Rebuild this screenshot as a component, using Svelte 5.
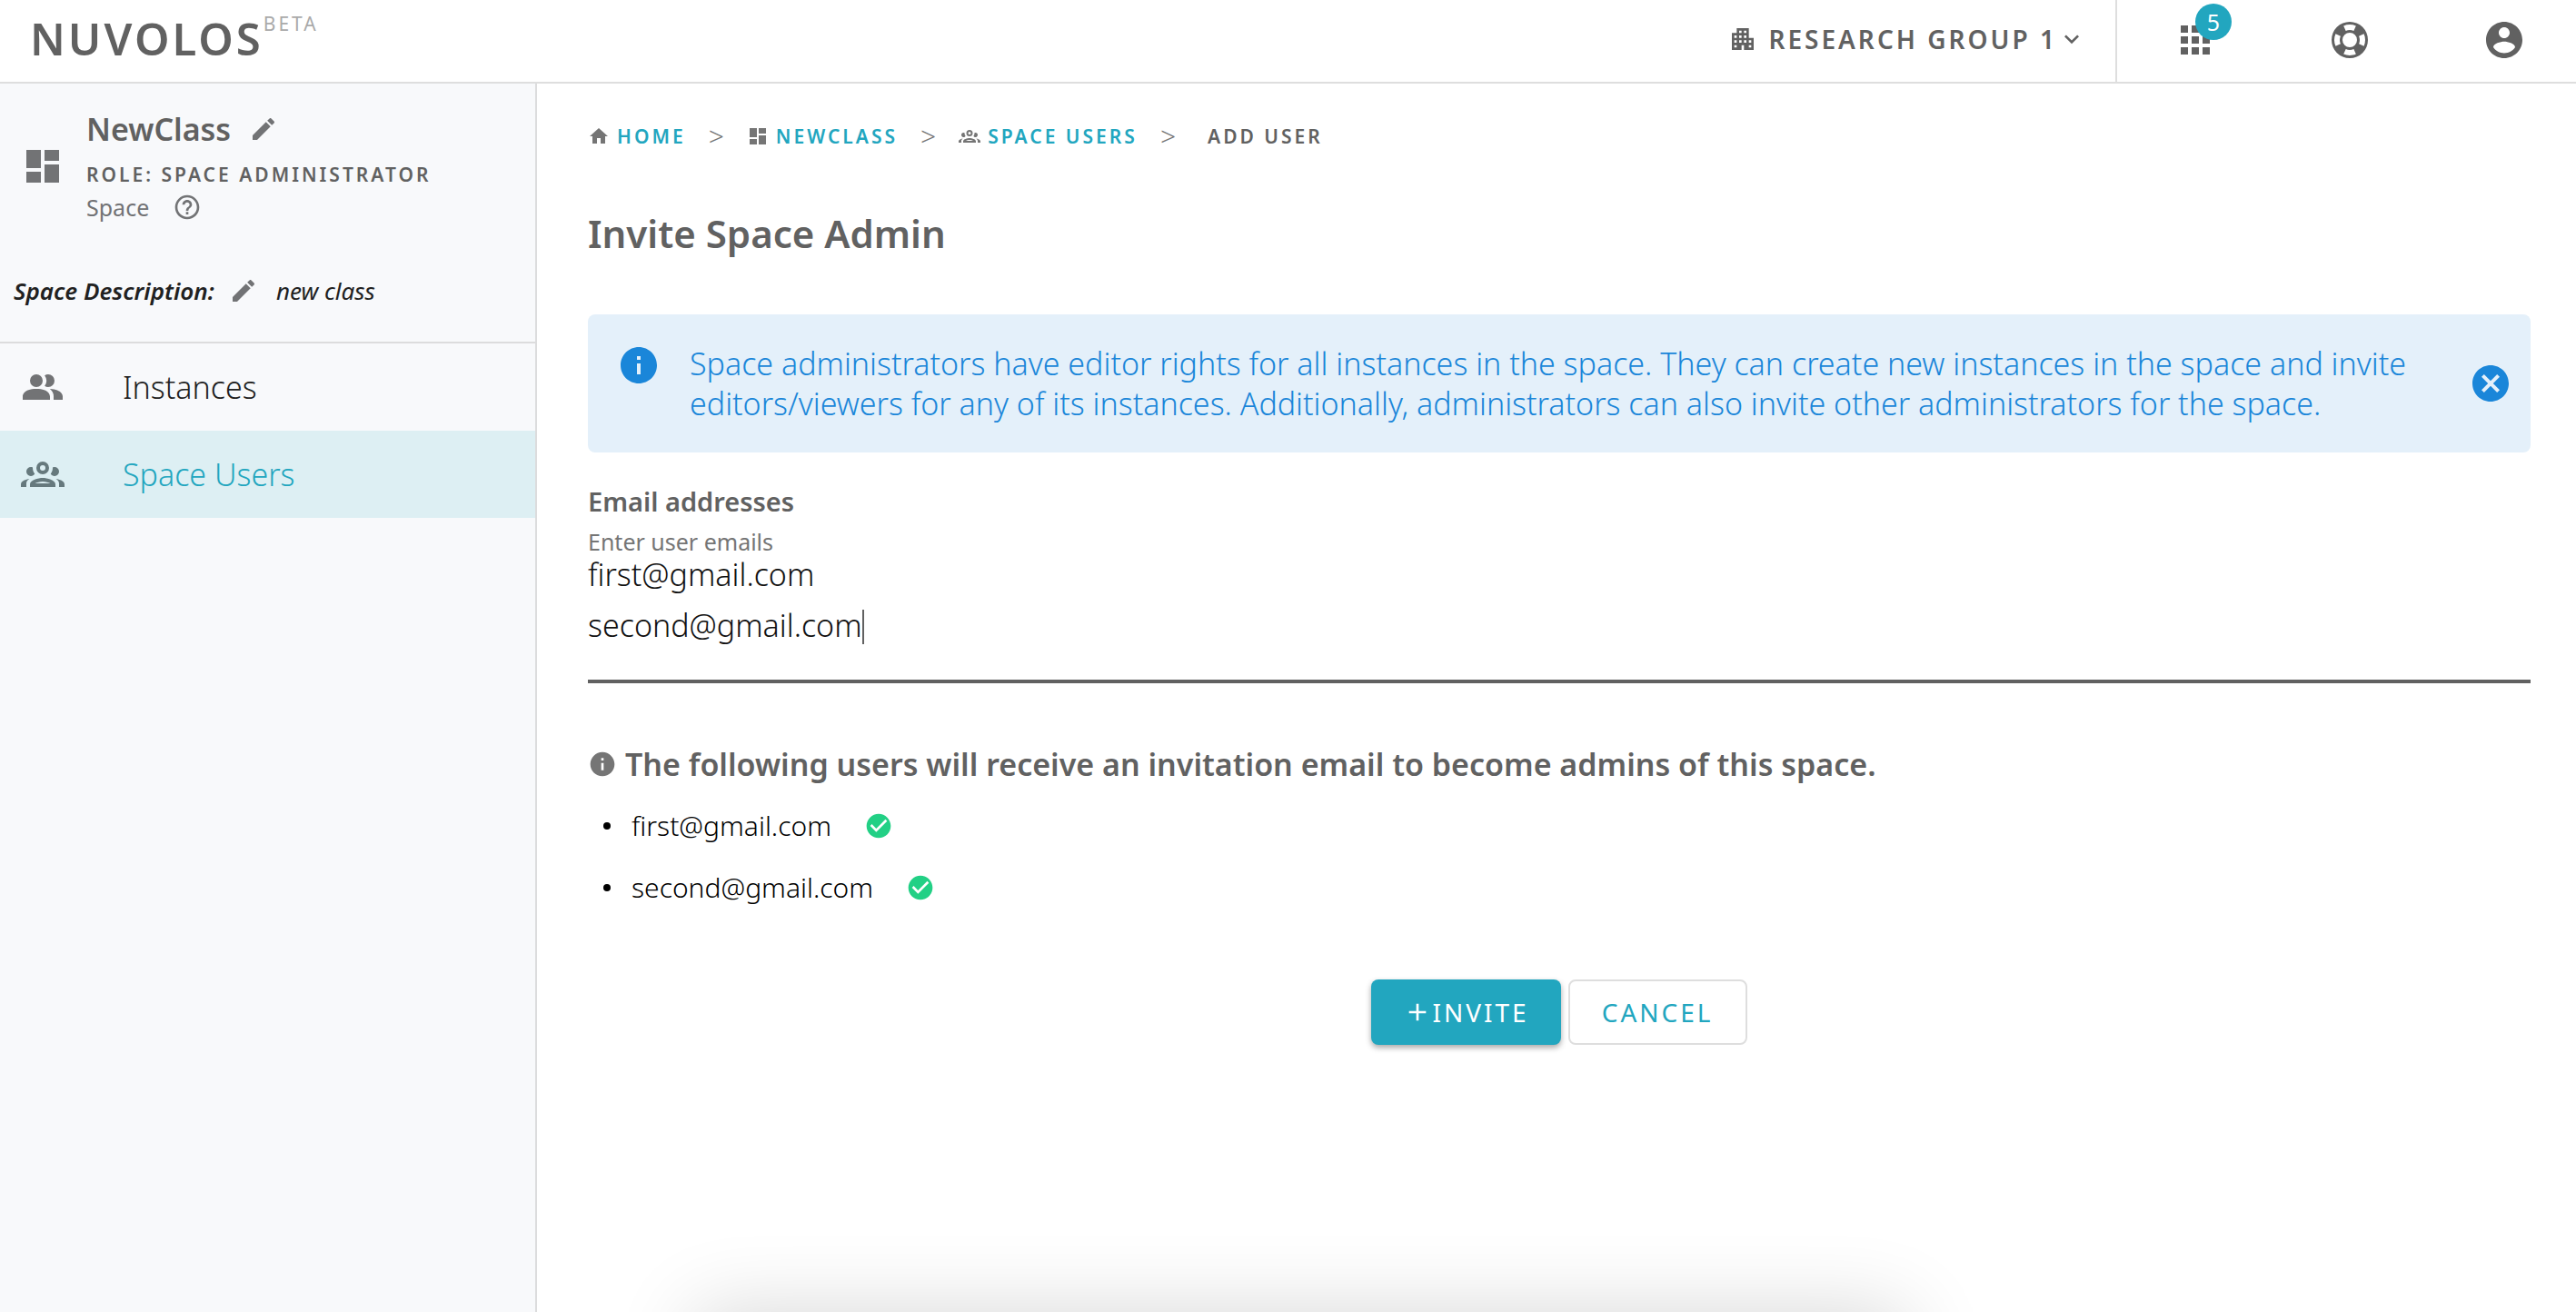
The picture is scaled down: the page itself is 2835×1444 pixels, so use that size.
<script>
  const icons = {
    dashboard: 'M3 13h8V3H3v10zm0 8h8v-6H3v6zm10 0h8V11h-8v10zm0-18v6h8V3h-8z',
    pencil: 'M20.71 7.04c.39-.39.39-1.04 0-1.41l-2.34-2.34c-.37-.39-1.02-.39-1.41 0l-1.84 1.83 3.75 3.75M3 17.25V21h3.75L17.81 9.93l-3.75-3.75L3 17.25z',
    help: 'M11 18h2v-2h-2v2zm1-16C6.48 2 2 6.48 2 12s4.48 10 10 10 10-4.48 10-10S17.52 2 12 2zm0 18c-4.41 0-8-3.59-8-8s3.59-8 8-8 8 3.59 8 8-3.59 8-8 8zm0-14c-2.21 0-4 1.79-4 4h2c0-1.1.9-2 2-2s2 .9 2 2c0 2-3 1.75-3 5h2c0-2.25 3-2.5 3-5 0-2.21-1.79-4-4-4z',
    people: 'M16 17v2H1v-2s0-4 7.5-4 7.5 4 7.5 4M12 8.5A3.5 3.5 0 1 0 5 8.5a3.5 3.5 0 0 0 7 0m3.94 4.5A5.32 5.32 0 0 1 18 17v2h5v-2s0-3.63-7.06-4M15 5a3.39 3.39 0 0 0-1.93.59 5 5 0 0 1 0 5.82A3.39 3.39 0 0 0 15 12a3.5 3.5 0 0 0 0-7z',
    group: 'M12,5A3.5,3.5 0 0,0 8.5,8.5A3.5,3.5 0 0,0 12,12A3.5,3.5 0 0,0 15.5,8.5A3.5,3.5 0 0,0 12,5M12,7A1.5,1.5 0 0,1 13.5,8.5A1.5,1.5 0 0,1 12,10A1.5,1.5 0 0,1 10.5,8.5A1.5,1.5 0 0,1 12,7M5.5,8A2.5,2.5 0 0,0 3,10.5C3,11.44 3.53,12.25 4.29,12.68C4.65,12.88 5.06,13 5.5,13C5.94,13 6.35,12.88 6.71,12.68C7.08,12.47 7.39,12.17 7.62,11.81C6.89,10.86 6.5,9.7 6.5,8.5C6.5,8.41 6.5,8.31 6.5,8.22C6.2,8.08 5.86,8 5.5,8M18.5,8C18.14,8 17.8,8.08 17.5,8.22C17.5,8.31 17.5,8.41 17.5,8.5C17.5,9.7 17.11,10.86 16.38,11.81C16.5,12 16.63,12.15 16.78,12.3C16.94,12.45 17.1,12.58 17.29,12.68C17.65,12.88 18.06,13 18.5,13C18.94,13 19.35,12.88 19.71,12.68C20.47,12.25 21,11.44 21,10.5A2.5,2.5 0 0,0 18.5,8M12,14C9.66,14 5,15.17 5,17.5V19H19V17.5C19,15.17 14.34,14 12,14M4.71,14.55C2.78,14.78 0,15.76 0,17.5V19H3V17.07C3,16.06 3.69,15.22 4.71,14.55M19.29,14.55C20.31,15.22 21,16.06 21,17.07V19H24V17.5C24,15.76 21.22,14.78 19.29,14.55M12,16C13.53,16 15.24,16.5 16.23,17H7.77C8.76,16.5 10.47,16 12,16Z',
    building: 'M17 11V3H7v4H3v14h8v-4h2v4h8V11h-4zM7 19H5v-2h2v2zm0-4H5v-2h2v2zm0-4H5V9h2v2zm4 4H9v-2h2v2zm0-4H9V9h2v2zm0-4H9V5h2v2zm4 8h-2v-2h2v2zm0-4h-2V9h2v2zm0-4h-2V5h2v2zm4 12h-2v-2h2v2zm0-4h-2v-2h2v2z',
    chevron: 'M7.41 8.58 12 13.17l4.59-4.59L18 10l-6 6-6-6 1.41-1.42z',
    apps: 'M4 8h4V4H4v4zm6 12h4v-4h-4v4zm-6 0h4v-4H4v4zm0-6h4v-4H4v4zm6 0h4v-4h-4v4zm6-10v4h4V4h-4zm-6 4h4V4h-4v4zm6 6h4v-4h-4v4zm0 6h4v-4h-4v4z',
    lifebuoy: 'M19.79 15.41C20.74 13.24 20.74 10.75 19.79 8.59L17.05 9.83C17.65 11.21 17.65 12.78 17.06 14.17L19.79 15.41M15.42 4.21C13.25 3.26 10.76 3.26 8.59 4.21L9.83 6.94C11.22 6.35 12.79 6.35 14.18 6.95L15.42 4.21M4.21 8.58C3.26 10.76 3.26 13.24 4.21 15.42L6.95 14.17C6.35 12.79 6.35 11.21 6.95 9.82L4.21 8.58M8.59 19.79C10.76 20.74 13.25 20.74 15.42 19.78L14.18 17.05C12.8 17.65 11.22 17.65 9.84 17.06L8.59 19.79M12 2A10 10 0 0 1 22 12A10 10 0 0 1 12 22A10 10 0 0 1 2 12A10 10 0 0 1 12 2M12 8A4 4 0 0 0 8 12A4 4 0 0 0 12 16A4 4 0 0 0 16 12A4 4 0 0 0 12 8Z',
    account: 'M12 2C6.48 2 2 6.48 2 12s4.48 10 10 10 10-4.48 10-10S17.52 2 12 2zm0 3c1.66 0 3 1.34 3 3s-1.34 3-3 3-3-1.34-3-3 1.34-3 3-3zm0 14.2c-2.5 0-4.71-1.28-6-3.22.03-1.99 4-3.08 6-3.08 1.99 0 5.97 1.09 6 3.08-1.29 1.94-3.5 3.22-6 3.22z',
    home: 'M10 20v-6h4v6h5v-8h3L12 3 2 12h3v8h5z',
    info: 'M12 2C6.48 2 2 6.48 2 12s4.48 10 10 10 10-4.48 10-10S17.52 2 12 2zm1 15h-2v-6h2v6zm0-8h-2V7h2v2z',
    close: 'M12 2C6.47 2 2 6.47 2 12s4.47 10 10 10 10-4.47 10-10S17.53 2 12 2zm5 13.59L15.59 17 12 13.41 8.41 17 7 15.59 10.59 12 7 8.41 8.41 7 12 10.59 15.59 7 17 8.41 13.41 12 17 15.59z',
    check: 'M12 2C6.48 2 2 6.48 2 12s4.48 10 10 10 10-4.48 10-10S17.52 2 12 2zm-2 15l-5-5 1.41-1.41L10 14.17l7.59-7.59L19 8l-9 9z',
    plus: 'M19 13h-6v6h-2v-6H5v-2h6V5h2v6h6v2z'
  };

  const nav = [
    { label: 'Instances', icon: 'people', active: false },
    { label: 'Space Users', icon: 'group', active: true }
  ];

  const crumbs = [
    { label: 'Home', icon: 'home' },
    { label: 'NewClass', icon: 'dashboard' },
    { label: 'Space Users', icon: 'group' }
  ];

  let emails = $state('first@gmail.com\nsecond@gmail.com');
  let showInfo = $state(true);
  let recipients = $derived(emails.split('\n').map((e) => e.trim()).filter(Boolean));
</script>

{#snippet icon(name, size)}
  <svg class="icon {size}" viewBox="0 0 24 24" aria-hidden="true"><path d={icons[name]} /></svg>
{/snippet}

<div class="app">
  <header>
    <a class="logo" href="#home">NUVOLOS<sup>BETA</sup></a>
    <button class="group">
      {@render icon('building', 'sm')}
      <span>RESEARCH GROUP 1</span>
      {@render icon('chevron', 'sm')}
    </button>
    <div class="actions">
      <button class="bare badged" aria-label="Applications">
        {@render icon('apps', 'lg')}
        <span class="badge">5</span>
      </button>
      <button class="bare" aria-label="Support">{@render icon('lifebuoy', 'lg')}</button>
      <button class="bare" aria-label="Account">{@render icon('account', 'lg')}</button>
    </div>
  </header>

  <div class="body">
    <aside>
      <div class="space">
        <div class="summary">
          {@render icon('dashboard', 'lg')}
          <div class="details">
            <div class="line name">
              <h2>NewClass</h2>
              <button class="bare" aria-label="Rename space">{@render icon('pencil', 'sm')}</button>
            </div>
            <div class="role">ROLE: SPACE ADMINISTRATOR</div>
            <div class="line kind">
              <span>Space</span>
              <button class="bare" aria-label="About spaces">{@render icon('help', 'sm')}</button>
            </div>
          </div>
        </div>
        <div class="description">
          <strong>Space Description:</strong>
          <button class="bare" aria-label="Edit description">{@render icon('pencil', 'sm')}</button>
          <span>new class</span>
        </div>
      </div>
      <nav>
        {#each nav as item}
          <a href="#{item.icon}" class:active={item.active}>
            {@render icon(item.icon, 'lg')}
            <span>{item.label}</span>
          </a>
        {/each}
      </nav>
    </aside>

    <main>
      <ol class="crumbs">
        {#each crumbs as crumb}
          <li>
            {@render icon(crumb.icon, 'xs')}
            <a href="#{crumb.icon}">{crumb.label}</a>
          </li>
          <li class="sep" aria-hidden="true">&gt;</li>
        {/each}
        <li class="current">Add user</li>
      </ol>

      <h1>Invite Space Admin</h1>

      {#if showInfo}
        <div class="alert">
          <div class="alert-icon">{@render icon('info', 'lg')}</div>
          <p>Space administrators have editor rights for all instances in the space. They can create new instances in the space and invite editors/viewers for any of its instances. Additionally, administrators can also invite other administrators for the space.</p>
          <button class="bare" aria-label="Dismiss" onclick={() => (showInfo = false)}>{@render icon('close', 'lg')}</button>
        </div>
      {/if}

      <h3>Email addresses</h3>
      <label for="emails">Enter user emails</label>
      <div class="field">
        <div class="mirror" aria-hidden="true"><span>{emails}</span><i class="caret"></i></div>
        <textarea id="emails" rows="2" spellcheck="false" bind:value={emails}></textarea>
      </div>

      <div class="notice">
        {@render icon('info', 'sm')}
        <strong>The following users will receive an invitation email to become admins of this space.</strong>
      </div>
      <ul class="recipients">
        {#each recipients as email}
          <li><span>{email}</span>{@render icon('check', 'sm')}</li>
        {/each}
      </ul>

      <div class="buttons">
        <button class="primary">{@render icon('plus', 'sm')}INVITE</button>
        <button class="secondary">CANCEL</button>
      </div>
    </main>
  </div>
  <div class="sheet" aria-hidden="true"></div>
</div>

<style>
  :global(body) {
    background: #fff;
  }
  .app {
    display: flex;
    flex-direction: column;
    min-height: 100vh;
    font-family: 'Noto Sans', 'Open Sans', sans-serif;
    font-size: 34px;
    font-weight: 300;
    color: #212121;
  }
  .app * {
    box-sizing: border-box;
  }
  h1, h2, h3, p, ol, ul {
    margin: 0;
    padding: 0;
    font-weight: 600;
  }
  strong {
    font-weight: 600;
  }
  a {
    text-decoration: none;
    color: inherit;
  }
  button {
    font: inherit;
    color: inherit;
    background: none;
    border: 0;
    padding: 0;
    cursor: pointer;
  }
  .bare {
    display: flex;
  }
  .icon {
    display: block;
    flex: none;
    fill: currentColor;
  }
  .xs {
    width: 24px;
    height: 24px;
  }
  .sm {
    width: 32px;
    height: 32px;
  }
  .lg {
    width: 48px;
    height: 48px;
  }

  header {
    display: flex;
    align-items: stretch;
    height: 92px;
    border-bottom: 2px solid #dedede;
    color: #616161;
  }
  .logo {
    margin-right: auto;
    padding: 12px 0 0 33px;
    font-size: 49px;
    line-height: 60px;
    font-weight: 600;
    letter-spacing: 3px;
  }
  .logo sup {
    display: inline-block;
    vertical-align: top;
    font-size: 21px;
    line-height: 28px;
    font-weight: 400;
    letter-spacing: 3px;
    color: #aaa;
  }
  .group {
    display: flex;
    align-items: center;
    padding: 0 32px 4px 0;
    font-size: 28px;
    font-weight: 600;
    letter-spacing: 3px;
  }
  .group span {
    padding-left: 12px;
  }
  .actions {
    display: flex;
    align-items: center;
    gap: 122px;
    padding: 0 55px 2px 62px;
    border-left: 2px solid #dedede;
  }
  .badged {
    position: relative;
  }
  .badge {
    position: absolute;
    left: 24px;
    top: -16px;
    width: 40px;
    height: 40px;
    border-radius: 50%;
    background: #22a6bf;
    color: #fff;
    font-size: 25px;
    font-weight: 400;
    line-height: 40px;
    text-align: center;
  }

  .body {
    display: flex;
    flex: 1;
  }
  aside {
    flex: none;
    width: 591px;
    background: #f8f9fb;
    border-right: 2px solid #dcdcdd;
    color: #727375;
  }
  .space {
    padding: 28px 0 38px;
    border-bottom: 2px solid #dcdcdd;
  }
  .summary {
    display: flex;
    align-items: center;
    gap: 24px;
    padding-left: 23px;
  }
  .details {
    display: flex;
    flex-direction: column;
  }
  .line {
    display: flex;
    align-items: center;
    gap: 20px;
  }
  h2 {
    font-size: 34px;
    line-height: 44px;
    color: #616161;
  }
  .role {
    margin-top: 10px;
    font-size: 21px;
    line-height: 36px;
    font-weight: 600;
    letter-spacing: 3px;
    color: #616161;
  }
  .kind {
    font-size: 25px;
    font-weight: 400;
    line-height: 36px;
    gap: 26px;
  }
  .description {
    display: flex;
    align-items: center;
    margin-top: 56px;
    padding-left: 15px;
    font-size: 26px;
    font-weight: 400;
    line-height: 36px;
    font-style: italic;
    color: #212121;
  }
  .description .bare {
    margin: 0 20px 0 16px;
    color: #727375;
  }
  nav a {
    display: flex;
    align-items: center;
    gap: 64px;
    height: 96px;
    padding-left: 23px;
  }
  nav span {
    color: #212121;
  }
  nav .active {
    background: #ddeff3;
    color: #66797d;
  }
  nav .active span {
    color: #22a6bf;
  }

  main {
    flex: 1;
    min-width: 0;
    padding: 40px 50px 0 56px;
  }
  .crumbs {
    display: flex;
    align-items: center;
    list-style: none;
    font-size: 21px;
    line-height: 36px;
    letter-spacing: 3px;
    text-transform: uppercase;
    color: #757575;
  }
  .crumbs li {
    display: flex;
    align-items: center;
    gap: 8px;
  }
  .crumbs a {
    color: #22a6bf;
  }
  .crumbs .sep {
    padding: 0 25px;
    font-size: 30px;
    font-weight: 300;
    letter-spacing: 0;
    color: #757575;
  }
  .crumbs .current {
    padding-left: 10px;
    color: #616161;
  }
  h1 {
    margin-top: 61px;
    font-size: 42px;
    line-height: 56px;
    color: #616161;
  }
  .alert {
    display: flex;
    align-items: center;
    gap: 12px;
    margin-top: 61px;
    padding: 32px 20px 32px 32px;
    border-radius: 8px;
    background: #e4f0fa;
    color: #1a86d9;
  }
  .alert p {
    flex: 1;
    padding-left: 20px;
    font-weight: inherit;
    line-height: 44px;
  }
  .alert-icon {
    align-self: flex-start;
  }
  h3 {
    margin-top: 36px;
    font-size: 29px;
    line-height: 36px;
    color: #616161;
  }
  label {
    display: block;
    margin-top: 14px;
    font-size: 25px;
    font-weight: 400;
    line-height: 24px;
    color: #757575;
  }
  .field {
    display: grid;
    margin-top: -4px;
    padding-bottom: 32px;
    border-bottom: 4px solid #616161;
    line-height: 56px;
  }
  .mirror, textarea {
    grid-area: 1 / 1;
    font: inherit;
    white-space: pre-wrap;
  }
  .mirror span {
    color: transparent;
  }
  .caret {
    display: inline-block;
    width: 2px;
    height: 38px;
    vertical-align: -8px;
    background: #616161;
  }
  textarea {
    display: block;
    width: 100%;
    padding: 0;
    border: 0;
    outline: 0;
    resize: none;
    overflow: hidden;
    background: none;
    color: #111;
    caret-color: transparent;
  }
  .notice {
    display: flex;
    align-items: center;
    gap: 9px;
    margin-top: 67px;
    line-height: 44px;
    color: #757575;
  }
  .notice strong {
    color: #616161;
  }
  .recipients {
    margin-top: 12px;
    font-size: 30px;
    line-height: 68px;
    list-style: none;
    color: #000;
  }
  .recipients li {
    display: flex;
    align-items: center;
    padding-left: 17px;
    font-weight: 300;
  }
  .recipients li::before {
    content: '';
    width: 8px;
    height: 8px;
    margin-right: 23px;
    border-radius: 50%;
    background: #000;
  }
  .recipients .icon {
    margin-left: 36px;
    fill: #22d085;
  }
  .buttons {
    display: flex;
    justify-content: center;
    gap: 8px;
    margin-top: 67px;
    font-size: 28px;
    font-weight: 400;
    letter-spacing: 3px;
  }
  .buttons button {
    display: flex;
    align-items: center;
    justify-content: center;
    height: 72px;
    padding: 0 35px;
    border-radius: 8px;
    letter-spacing: inherit;
  }
  .buttons .primary {
    background: #22a6bf;
    color: #fff;
    box-shadow: 0 3px 6px rgba(0, 0, 0, 0.35);
  }
  .buttons .secondary {
    border: 2px solid #dedede;
    color: #22a6bf;
  }
  .sheet {
    position: fixed;
    left: 27%;
    right: 26%;
    top: 100%;
    height: 200px;
    box-shadow: 0 0 90px rgba(0, 0, 0, 0.16);
    pointer-events: none;
  }
</style>
